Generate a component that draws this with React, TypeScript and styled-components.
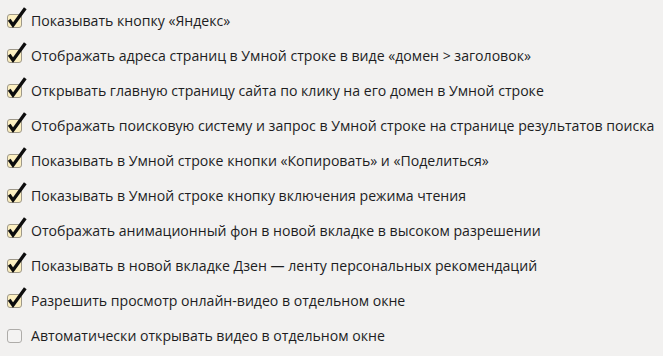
import React from "react";
import styled, { createGlobalStyle } from "styled-components";

const Global = createGlobalStyle`
  html, body { margin: 0; padding: 0; background: #f2f1f0; }
  body { font-family: "Open Sans", "Noto Sans", sans-serif; }
`;

const Page = styled.div`
  width: 663px;
  height: 356px;
  background: #f2f1f0;
  padding: 3px 0 0 7px;
  box-sizing: border-box;
  display: flex;
  flex-direction: column;
  overflow: hidden;
`;

const Row = styled.label`
  display: flex;
  align-items: center;
  height: 35px;
  gap: 9px;
  cursor: default;
`;

const Text = styled.span`
  font-size: 14.1px;
  color: #1d1d1f;
  white-space: nowrap;
  line-height: 20px;
  padding-top: 1px;
`;

const BoxSvg = styled.svg`
  display: block;
  flex: none;
  overflow: visible;
  margin-top: 1px;
`;

const Check = ({ on }: { on: boolean }) => (
  <BoxSvg width="15" height="14" viewBox="0 0 15 14">
    <rect
      x="0.5"
      y="0.5"
      width="14"
      height="13"
      rx="2.5"
      fill={on ? "#fcefc0" : "#f4f3f2"}
      stroke={on ? "#9e9889" : "#aeaca9"}
    />
    {on && (
      <path
        d="M2.2 5.8 L6 11.2 L18.3 -5.8"
        fill="none"
        stroke="#0d0d0d"
        strokeWidth="3.3"
        strokeLinecap="butt"
        strokeLinejoin="miter"
      />
    )}
  </BoxSvg>
);

const items: [string, boolean][] = [
  ["Показывать кнопку «Яндекс»", true],
  ["Отображать адреса страниц в Умной строке в виде «домен > заголовок»", true],
  ["Открывать главную страницу сайта по клику на его домен в Умной строке", true],
  ["Отображать поисковую систему и запрос в Умной строке на странице результатов поиска", true],
  ["Показывать в Умной строке кнопки «Копировать» и «Поделиться»", true],
  ["Показывать в Умной строке кнопку включения режима чтения", true],
  ["Отображать анимационный фон в новой вкладке в высоком разрешении", true],
  ["Показывать в новой вкладке Дзен — ленту персональных рекомендаций", true],
  ["Разрешить просмотр онлайн-видео в отдельном окне", true],
  ["Автоматически открывать видео в отдельном окне", false],
];

export default function App() {
  return (
    <>
      <Global />
      <Page>
        {items.map(([t, on], i) => (
          <Row key={i}>
            <Check on={on} />
            <Text>{t}</Text>
          </Row>
        ))}
      </Page>
    </>
  );
}
